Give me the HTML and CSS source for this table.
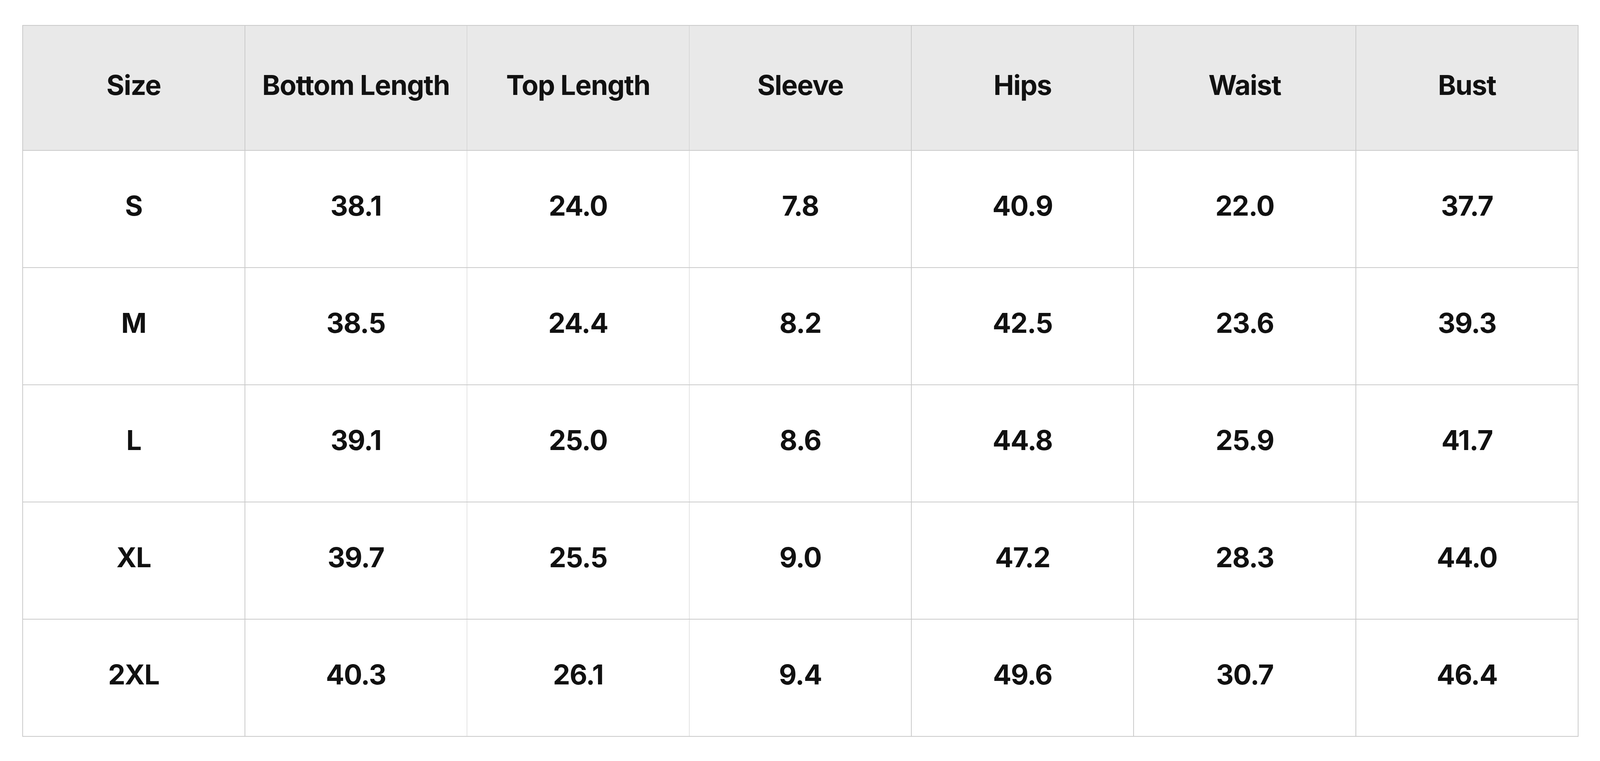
FILE: index.html
```html
<!DOCTYPE html>
<html>
<head>
<meta charset="utf-8">
<link rel="stylesheet" href="styles.css">
</head>
<body>
<div class="page">
  <div class="size-grid">
    <div class="cell head">Size</div>
    <div class="cell head">Bottom Length</div>
    <div class="cell head">Top Length</div>
    <div class="cell head">Sleeve</div>
    <div class="cell head">Hips</div>
    <div class="cell head">Waist</div>
    <div class="cell head">Bust</div>

    <div class="cell">S</div><div class="cell">38.1</div><div class="cell">24.0</div><div class="cell">7.8</div><div class="cell">40.9</div><div class="cell">22.0</div><div class="cell">37.7</div>
    <div class="cell">M</div><div class="cell">38.5</div><div class="cell">24.4</div><div class="cell">8.2</div><div class="cell">42.5</div><div class="cell">23.6</div><div class="cell">39.3</div>
    <div class="cell">L</div><div class="cell">39.1</div><div class="cell">25.0</div><div class="cell">8.6</div><div class="cell">44.8</div><div class="cell">25.9</div><div class="cell">41.7</div>
    <div class="cell">XL</div><div class="cell">39.7</div><div class="cell">25.5</div><div class="cell">9.0</div><div class="cell">47.2</div><div class="cell">28.3</div><div class="cell">44.0</div>
    <div class="cell">2XL</div><div class="cell">40.3</div><div class="cell">26.1</div><div class="cell">9.4</div><div class="cell">49.6</div><div class="cell">30.7</div><div class="cell">46.4</div>
  </div>
</div>
</body>
</html>
```
FILE: styles.css
```css
:root {
  --ux: calc(100vw / 4608);
  --uy: calc(100vh / 1948);
}
html, body {
  margin: 0;
  padding: 0;
  background: #ffffff;
}
.page {
  padding: calc(var(--uy) * 64) 0 0 calc(var(--ux) * 64);
}
.size-grid {
  width: calc(var(--ux) * 4482);
  box-sizing: border-box;
  display: grid;
  grid-template-columns: repeat(7, 1fr);
  grid-template-rows: calc(var(--uy) * 318) repeat(5, calc(var(--uy) * 298));
  column-gap: calc(var(--ux) * 2);
  row-gap: calc(var(--uy) * 2);
  padding: calc(var(--uy) * 2) calc(var(--ux) * 2);
  background: #cacaca;
  font-family: Inter, "Noto Sans", sans-serif;
  font-weight: 700;
  font-size: calc((var(--ux) + var(--uy)) * 37);
  letter-spacing: calc(var(--ux) * -1.6);
  color: #111111;
}
.cell {
  background: #ffffff;
  display: flex;
  align-items: center;
  justify-content: center;
  line-height: 1.2;
  padding-bottom: calc(var(--uy) * 16);
  box-sizing: border-box;
  white-space: nowrap;
}
.cell.head {
  background: #e9e9e9;
  padding-bottom: calc(var(--uy) * 15);
}
```
